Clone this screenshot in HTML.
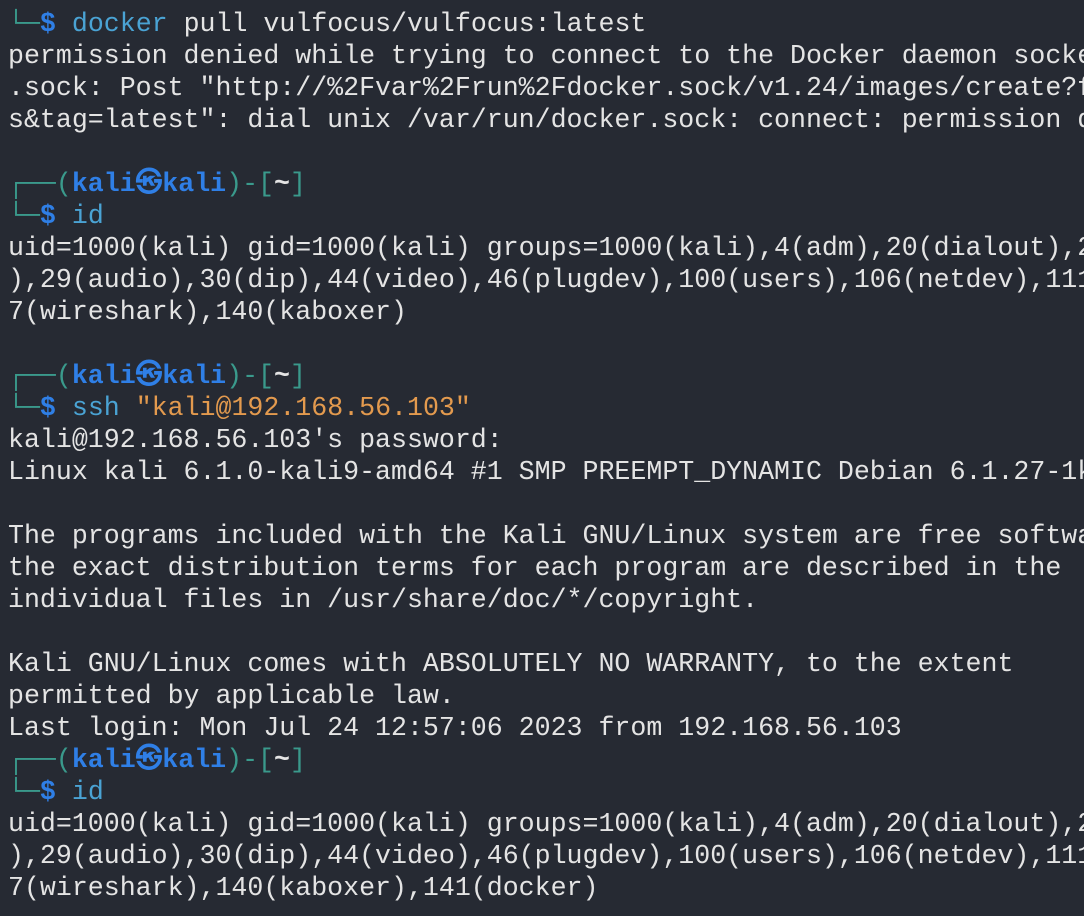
<!DOCTYPE html>
<html><head><meta charset="utf-8"><style>
html,body{margin:0;padding:0;background:#262a33;width:1084px;height:916px;overflow:hidden}
pre{margin:0;padding:8px 0 0 8px;width:1076px;overflow:hidden;font-family:"Liberation Mono","DejaVu Sans Mono",monospace;font-size:26.6px;line-height:32px;color:#e4e4e4;white-space:pre}
.g{color:#3a9a8c}.b{color:#2f7fe6;font-weight:bold}.c{color:#4aa3d4}.o{color:#e39a4e}.d{color:#2f7fe6;font-weight:bold}
</style></head><body><pre><span class="g">└─</span><span class="d">$</span> <span class="c">docker</span> pull vulfocus/vulfocus:latest
permission denied while trying to connect to the Docker daemon socke
.sock: Post "http://%2Fvar%2Frun%2Fdocker.sock/v1.24/images/create?f
s&amp;tag=latest": dial unix /var/run/docker.sock: connect: permission d

<span class="g">┌──(</span><span class="b">kali㉿kali</span><span class="g">)-[</span><span style="color:#e4e4e4;font-weight:bold">~</span><span class="g">]</span>
<span class="g">└─</span><span class="d">$</span> <span class="c">id</span>
uid=1000(kali) gid=1000(kali) groups=1000(kali),4(adm),20(dialout),2
),29(audio),30(dip),44(video),46(plugdev),100(users),106(netdev),111
7(wireshark),140(kaboxer)

<span class="g">┌──(</span><span class="b">kali㉿kali</span><span class="g">)-[</span><span style="color:#e4e4e4;font-weight:bold">~</span><span class="g">]</span>
<span class="g">└─</span><span class="d">$</span> <span class="c">ssh</span> <span class="o">"kali@192.168.56.103"</span>
kali@192.168.56.103's password:
Linux kali 6.1.0-kali9-amd64 #1 SMP PREEMPT_DYNAMIC Debian 6.1.27-1k

The programs included with the Kali GNU/Linux system are free softwa
the exact distribution terms for each program are described in the
individual files in /usr/share/doc/*/copyright.

Kali GNU/Linux comes with ABSOLUTELY NO WARRANTY, to the extent
permitted by applicable law.
Last login: Mon Jul 24 12:57:06 2023 from 192.168.56.103
<span class="g">┌──(</span><span class="b">kali㉿kali</span><span class="g">)-[</span><span style="color:#e4e4e4;font-weight:bold">~</span><span class="g">]</span>
<span class="g">└─</span><span class="d">$</span> <span class="c">id</span>
uid=1000(kali) gid=1000(kali) groups=1000(kali),4(adm),20(dialout),2
),29(audio),30(dip),44(video),46(plugdev),100(users),106(netdev),111
7(wireshark),140(kaboxer),141(docker)
</pre></body></html>
